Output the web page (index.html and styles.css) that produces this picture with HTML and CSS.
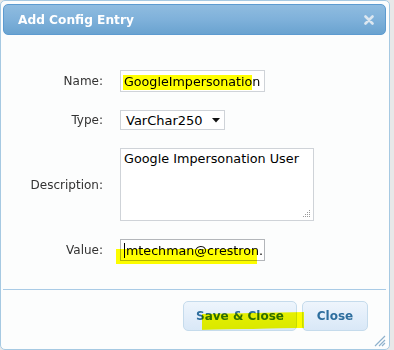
FILE: index.html
```html
<!DOCTYPE html>
<html lang="en">
<head>
    <meta charset="UTF-8">
    <meta name="viewport" content="width=device-width, initial-scale=1.0">
    <title>Add Config Entry</title>
    <link rel="stylesheet" href="styles.css">
</head>
<body>
    <div class="dialog">
        <div class="titlebar">
            <span class="title">Add Config Entry</span>
            <svg class="close-icon" width="10" height="10" viewBox="0 0 10 10">
                <path d="M1.5 1.5 L8.5 8.5 M8.5 1.5 L1.5 8.5" stroke="#dce7f0" stroke-width="2.6" stroke-linecap="round"/>
            </svg>
        </div>

        <div class="content">
            <div class="form">
                <label for="name">Name:</label>
                <div class="field">
                    <input type="text" id="name" value="GoogleImpersonation">
                    <span class="marker marker-name"></span>
                </div>

                <label>Type:</label>
                <div class="field">
                    <div class="select">
                        <span>VarChar250</span>
                        <svg width="8" height="5" viewBox="0 0 8 5"><path d="M0 0 H8 L4 4.5 Z" fill="#111"/></svg>
                    </div>
                </div>

                <label for="description">Description:</label>
                <div class="field">
                    <textarea id="description">Google Impersonation User</textarea>
                    <svg class="grip" width="8" height="8" viewBox="0 0 8 8">
                        <g fill="#9a9a9a">
                            <rect x="6" y="0" width="1" height="1"/>
                            <rect x="4" y="2" width="1" height="1"/><rect x="6" y="2" width="1" height="1"/>
                            <rect x="2" y="4" width="1" height="1"/><rect x="4" y="4" width="1" height="1"/><rect x="6" y="4" width="1" height="1"/>
                            <rect x="0" y="6" width="1" height="1"/><rect x="2" y="6" width="1" height="1"/><rect x="4" y="6" width="1" height="1"/><rect x="6" y="6" width="1" height="1"/>
                        </g>
                    </svg>
                </div>

                <label for="value">Value:</label>
                <div class="field">
                    <div class="input value-input"><span class="caret"></span><span class="value-text">mtechman@crestron.r</span></div>
                    <span class="marker marker-value"></span>
                </div>
            </div>
        </div>

        <div class="buttonpane">
            <div class="save-wrap">
                <button class="btn btn-save">Save &amp; Close</button>
                <span class="marker marker-save"></span>
            </div>
            <button class="btn btn-close">Close</button>
        </div>

        <svg class="resize" width="14" height="14" viewBox="0 0 14 14">
            <path d="M13 3 L3 13 M13 7 L7 13 M13 10 L10 13" stroke="#8fb1cc" stroke-width="1.2"/>
        </svg>
    </div>
</body>
</html>
```

FILE: styles.css
```css
* {
    box-sizing: border-box;
}

body {
    margin: 0;
    background: #e8e8e8;
    font-family: 'DejaVu Sans', Verdana, sans-serif;
    font-size: 12px;
}

.dialog {
    position: relative;
    width: 390px;
    height: 350px;
    background: #fcfdfd;
    border: 1px solid #a6c9e2;
    border-radius: 5px;
    padding: 3px 3px 0 2px;
}

.titlebar {
    height: 31px;
    display: flex;
    align-items: center;
    justify-content: space-between;
    padding: 0 11px 0 14px;
    border: 1px solid #5d9bd0;
    border-radius: 5px;
    background: linear-gradient(#8fbce0, #7fb1da 50%, #6aa3d0);
    color: #fff;
}

.title {
    font-weight: bold;
    font-size: 12.2px;
    margin-top: 1px;
}

.close-icon {
    display: block;
}

.content {
    padding: 35px 0 28px;
}

.form {
    display: grid;
    grid-template-columns: 100px auto;
    column-gap: 17px;
    row-gap: 18px;
    align-items: center;
}

label {
    text-align: right;
    color: #333;
}

.field {
    position: relative;
    justify-self: start;
}

input,
.input {
    display: block;
    width: 145px;
    height: 22px;
    border: 1px solid #cfd3d8;
    padding: 0 0 0 3px;
    font-family: inherit;
    font-size: 12.7px;
    color: #000;
    background: #fff;
    overflow: hidden;
    white-space: nowrap;
}

.value-input {
    display: flex;
    align-items: center;
    border-color: #b3b6ba;
}

.caret {
    flex: none;
    width: 1px;
    height: 15px;
    background: #000;
    margin-right: 1px;
}

.value-text {
    flex: none;
}

.select {
    width: 105px;
    height: 20px;
    display: flex;
    align-items: center;
    justify-content: space-between;
    padding: 0 4px 0 5px;
    border: 1px solid #cfd3d8;
    background: #fff;
    color: #000;
    font-size: 13px;
}

textarea {
    display: block;
    width: 194px;
    height: 73px;
    border: 1px solid #cfd3d8;
    padding: 2px 3px;
    font-family: inherit;
    font-size: 12.8px;
    color: #000;
    resize: none;
}

.grip {
    position: absolute;
    right: 3px;
    bottom: 3px;
}

.marker {
    position: absolute;
    background: #ffff00;
    mix-blend-mode: multiply;
    pointer-events: none;
}

.marker-name {
    left: 3px;
    top: 5px;
    width: 129px;
    height: 15px;
}

.marker-value {
    left: -4px;
    top: 10px;
    width: 141px;
    height: 15px;
}

.buttonpane {
    border-top: 1px solid #a9cbe6;
    padding: 11px 18px 0 0;
    display: flex;
    justify-content: flex-end;
    gap: 5px;
}

.save-wrap {
    position: relative;
}

.btn {
    height: 30px;
    padding: 0;
    border: 1px solid #c5dbec;
    border-radius: 5px;
    background: linear-gradient(#eef5fc, #e3eefa 50%, #d9e8f7);
    color: #2e6e9e;
    font-family: inherit;
    font-size: 12px;
    font-weight: bold;
}

.btn-save {
    width: 114px;
}

.btn-close {
    width: 66px;
}

.marker-save {
    left: 19px;
    top: 12px;
    width: 102px;
    height: 16px;
    transform: skewY(-1deg);
}

.resize {
    position: absolute;
    right: 3px;
    bottom: 2px;
}
```
